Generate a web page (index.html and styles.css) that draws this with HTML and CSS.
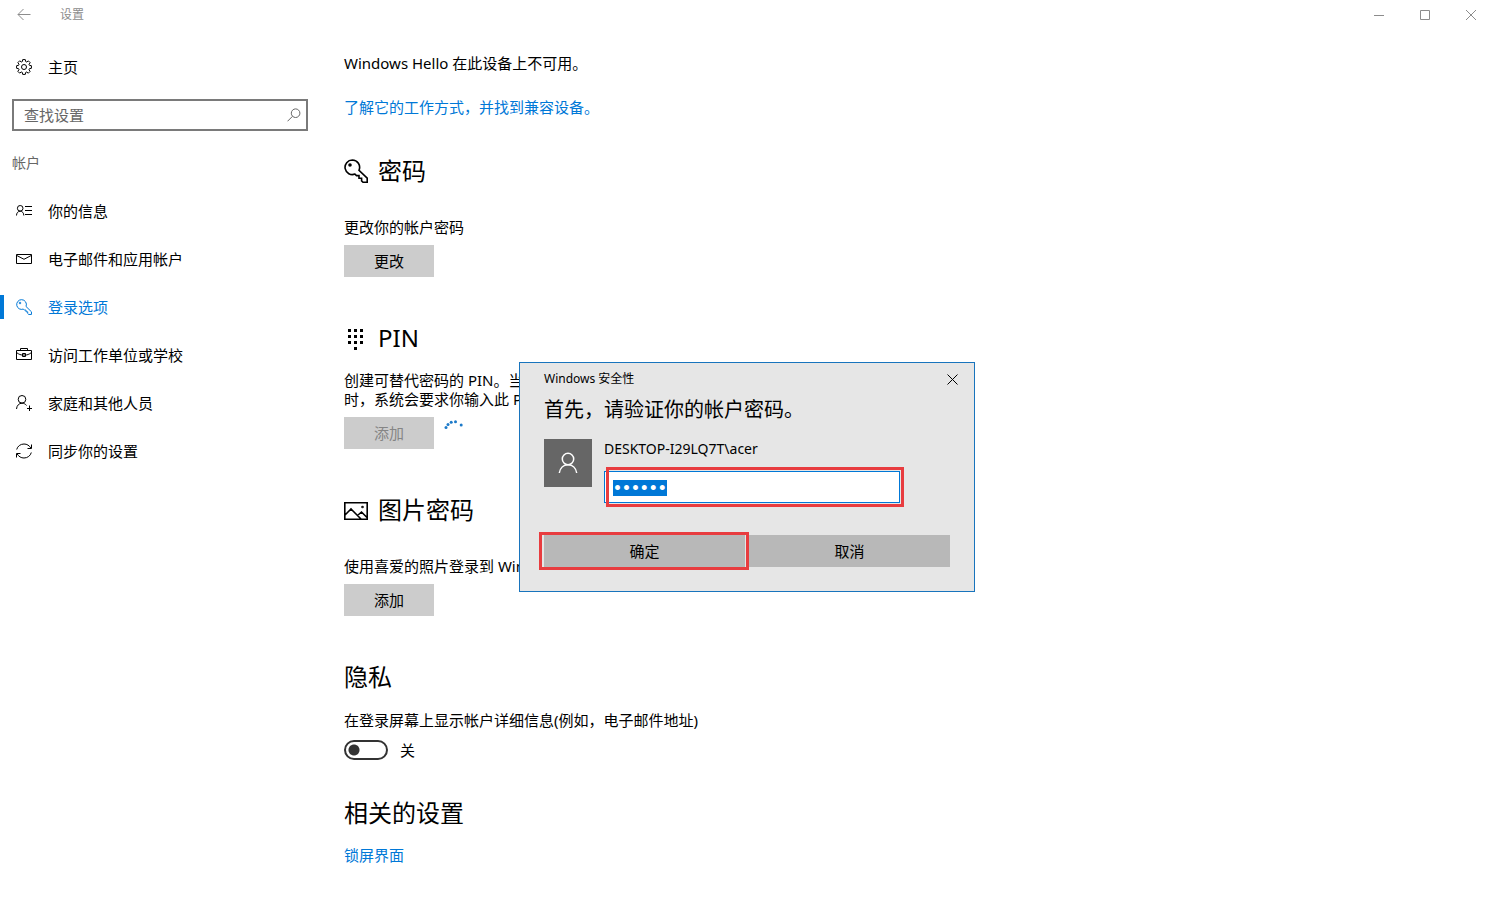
FILE: index.html
```html
<!DOCTYPE html>
<html lang="zh-CN">
<head>
<meta charset="utf-8">
<title>设置</title>
<link rel="stylesheet" href="styles.css">
</head>
<body>
<div class="window">
  <header class="titlebar">
    <button class="back" aria-label="返回"><svg width="14" height="14" viewBox="0 0 14 14"><path d="M13.500 6.500H1M6.500 1L1 6.500L6.500 12"/></svg></button>
    <span class="title">设置</span>
    <div class="caption">
      <button aria-label="最小化"><svg width="10" height="10" viewBox="0 0 10 10"><path d="M0 5.500H10"/></svg></button>
      <button aria-label="最大化"><svg width="10" height="10" viewBox="0 0 10 10"><path d="M.5 .5H9.500V9.500H.5Z"/></svg></button>
      <button aria-label="关闭"><svg width="10" height="10" viewBox="0 0 10 10"><path d="M0 0L10 10M10 0L0 10"/></svg></button>
    </div>
  </header>
  <div class="body">
    <aside class="sidebar">
      <a class="item" href="#home">
        <svg width="16" height="16" viewBox="0 0 16 16"><path d="M6.700 .6H9.300L9.700 2.600L10.700 3L12.400 1.900L14.200 3.700L13 5.300L13.400 6.300L15.400 6.700V9.300L13.400 9.700L13 10.700L14.100 12.400L12.300 14.200L10.700 13L9.700 13.400L9.300 15.400H6.700L6.300 13.400L5.300 13L3.600 14.100L1.800 12.300L3 10.700L2.600 9.700L.6 9.300V6.700L2.600 6.300L3 5.300L1.900 3.600L3.700 1.800L5.300 3L6.300 2.600Z"/><circle cx="8" cy="8" r="2.500"/></svg>
        <span>主页</span>
      </a>
      <div class="search">
        <input type="text" placeholder="查找设置" aria-label="查找设置">
        <svg width="14" height="14" viewBox="0 0 14 14"><circle cx="8.600" cy="5.200" r="4.300"/><path d="M5.500 8.300L.5 13.300"/></svg>
      </div>
      <h2 class="group">帐户</h2>
      <nav class="nav">
        <a class="item" href="#info">
          <svg width="16" height="16" viewBox="0 0 16 16"><circle cx="4.200" cy="5.300" r="2.800"/><path d="M.5 12.500C.5 10 2 8.200 4.200 8.200S7.800 10 7.800 12.500M9 3.500H16M9 7.500H16M9 11.500H16"/></svg>
          <span>你的信息</span>
        </a>
        <a class="item" href="#mail">
          <svg width="16" height="16" viewBox="0 0 16 16"><path d="M.5 3.500H15.500V12.500H.5ZM.8 4.500L8 8.300L15.200 4.500"/></svg>
          <span>电子邮件和应用帐户</span>
        </a>
        <a class="item active" href="#signin" aria-current="page">
          <svg width="16" height="16" viewBox="0 0 24 24" class="scaled"><path d="M8.300 1A7.300 7.300 0 1 0 11 15.100L12.500 16.600H15V19.200H17.600V21.800L19 23.200H23.200V19.200L15 11.200A7.300 7.300 0 0 0 8.300 1Z"/><circle cx="6" cy="6" r="1.200"/></svg>
          <span>登录选项</span>
        </a>
        <a class="item" href="#work">
          <svg width="16" height="16" viewBox="0 0 16 16"><path d="M.5 3.500H15.500V12.500H.5ZM4.500 3.500V1.500H11.500V3.500M.5 5.500C3 7.500 5 8 6.500 8H9.500C11 8 13 7.500 15.500 5.500M6.500 6.500H9.500V9.500H6.500Z"/></svg>
          <span>访问工作单位或学校</span>
        </a>
        <a class="item" href="#family">
          <svg width="16" height="16" viewBox="0 0 16 16"><circle cx="6" cy="4.300" r="3.800"/><path d="M.5 14C.8 10.500 3 8.200 6 8.200C7.800 8.200 9.500 9 10.500 10.500M13.500 10.500V16M11 13.500H16"/></svg>
          <span>家庭和其他人员</span>
        </a>
        <a class="item" href="#sync">
          <svg width="16" height="16" viewBox="0 0 16 16"><path d="M.7 6.500C1.500 3.200 4.500 1 8 1C11 1 13.300 2.500 14.800 5M15.500 1.500V5.500H11.500M15.300 9.500C14.500 12.800 11.500 15 8 15C5 15 2.700 13.500 1.200 11M.5 14.500V10.500H4.500"/></svg>
          <span>同步你的设置</span>
        </a>
      </nav>
    </aside>
    <main class="content">
      <p>Windows Hello 在此设备上不可用。</p>
      <a class="link learn" href="#learn">了解它的工作方式，并找到兼容设备。</a>

      <section class="option roomy">
        <h1><svg width="24" height="24" viewBox="0 0 24 24" class="bold"><path d="M8.300 1A7.300 7.300 0 1 0 11 15.100L12.500 16.600H15V19.200H17.600V21.800L19 23.200H23.200V19.200L15 11.200A7.300 7.300 0 0 0 8.300 1Z"/><circle cx="6" cy="6" r="1" fill="currentColor"/></svg>密码</h1>
        <p>更改你的帐户密码</p>
        <button class="action">更改</button>
      </section>

      <section class="option">
        <h1><svg width="24" height="24" viewBox="0 0 24 24" class="solid"><path d="M4 3h3v3H4zM10 3h3v3h-3zM16 3h3v3h-3zM4 9h3v3H4zM10 9h3v3h-3zM16 9h3v3h-3zM4 15h3v3H4zM10 15h3v3h-3zM16 15h3v3h-3zM10 21h3v3h-3z"/></svg>PIN</h1>
        <p class="multi">创建可替代密码的 PIN。当<br>时，系统会要求你输入此 PIN</p>
        <div class="row">
          <button class="action" disabled>添加</button>
          <svg width="20" height="20" viewBox="0 0 20 20" class="spinner"><circle cx="2" cy="8.500" r="1.500"/><circle cx="4" cy="5.500" r="1.500"/><circle cx="7.200" cy="3.300" r="1.500"/><circle cx="11.500" cy="2.700" r="1.500"/><circle cx="17.200" cy="6" r="1.500"/></svg>
        </div>
      </section>

      <section class="option roomy">
        <h1><svg width="24" height="24" viewBox="0 0 24 24" class="bold"><path d="M.8 4.800H23.200V21.200H.8ZM1 17L7 11L17 21M13.500 17.500L17.500 14L23 19.500"/><circle cx="18.500" cy="9" r=".5"/></svg>图片密码</h1>
        <p>使用喜爱的照片登录到 Windows</p>
        <button class="action">添加</button>
      </section>

      <section class="option">
        <h1>隐私</h1>
        <p id="details">在登录屏幕上显示帐户详细信息(例如，电子邮件地址)</p>
        <div class="row">
          <input class="switch" id="toggle" type="checkbox" role="switch" aria-describedby="details">
          <label for="toggle">关</label>
        </div>
      </section>

      <section class="option related">
        <h1>相关的设置</h1>
        <a class="link" href="#lock">锁屏界面</a>
      </section>
    </main>
  </div>
</div>

<div class="dialog" role="dialog" aria-labelledby="prompt">
  <div class="dialog-bar">
    <span>Windows 安全性</span>
    <button aria-label="关闭"><svg width="11" height="11" viewBox="0 0 11 11"><path d="M.5 .5L10.500 10.500M10.500 .5L.5 10.500"/></svg></button>
  </div>
  <h2 id="prompt">首先，请验证你的帐户密码。</h2>
  <div class="account">
    <div class="avatar"><svg width="24" height="24" viewBox="0 0 24 24"><circle cx="12" cy="8" r="5.700"/><path d="M3.300 22C4 17 7.500 13.700 12 13.700S20 17 20.700 22"/></svg></div>
    <div class="credentials">
      <label for="password">DESKTOP-I29LQ7T\acer</label>
      <div class="field">
        <input id="password" type="password" value="123456">
        <span class="mark"></span>
      </div>
    </div>
  </div>
  <div class="buttons">
    <div class="choice"><button>确定</button><span class="mark"></span></div>
    <div class="choice"><button>取消</button></div>
  </div>
</div>
<script src="script.js"></script>
</body>
</html>
```
FILE: styles.css
```css
* { box-sizing: border-box; }
body {
  margin: 0;
  background: #fff;
  color: #000;
  font: 15px/20px "Noto Sans", "Noto Sans CJK SC", sans-serif;
}
h1, h2, p { margin: 0; font-weight: 400; }
button, input { font: inherit; color: inherit; border: 0; border-radius: 0; padding: 0; }
button { background: none; }
a { color: inherit; text-decoration: none; }
svg { flex: none; fill: none; stroke: currentColor; stroke-width: 1; }
svg.scaled { stroke-width: 1.5; }
svg.bold { stroke-width: 1.6; }
svg.solid { fill: currentColor; stroke: none; }
svg.spinner { fill: #1c7ac9; stroke: none; }

.window { min-height: 100vh; display: flex; flex-direction: column; }
.titlebar { display: flex; align-items: center; height: 30px; color: #8c8c8c; font-size: 12px; }
.back { display: flex; justify-content: center; width: 48px; }
.title { padding-left: 12px; }
.caption { display: flex; margin-left: auto; }
.caption button { display: flex; align-items: center; justify-content: center; width: 46px; height: 30px; padding-left: 4px; }

.body { display: flex; flex: 1; }
.sidebar { flex: none; width: 320px; padding-top: 13px; }
.item { display: flex; align-items: center; gap: 16px; height: 48px; padding-left: 16px; }
.item.active { position: relative; color: #0078d7; }
.item.active::before { content: ""; position: absolute; left: 0; top: 12px; width: 4px; height: 24px; background: #0078d7; }
.search {
  display: flex; align-items: center;
  height: 32px; margin: 8px 12px; padding: 0 5px 0 10px;
  border: 2px solid #7a7a7a; color: #666;
}
.search input { flex: 1; min-width: 0; background: none; outline: 0; }
.search input::placeholder { color: #666; opacity: 1; }
.group { padding-left: 12px; color: #666; font-size: 14px; line-height: 48px; }

.content { flex: 1; min-width: 0; padding: 23px 24px; }
.link { color: #0078d7; }
.learn { display: block; margin-top: 24px; }
.option { margin-top: 45px; }
.learn + .option { margin-top: 38px; }
.option.related { margin-top: 27px; }
.option h1 { display: flex; align-items: center; gap: 10px; margin-bottom: 17px; font-size: 24px; line-height: 32px; }
.option.roomy h1 { margin-bottom: 30px; }
.option .multi { line-height: 19px; }
.action { display: block; width: 90px; height: 32px; margin-top: 8px; background: #ccc; }
.action:disabled { color: #858585; }
.row { display: flex; align-items: center; gap: 10px; }
.switch {
  appearance: none; width: 44px; height: 20px; margin: 10px 2px 10px 0;
  border: 2px solid #333; border-radius: 10px;
  background: radial-gradient(circle at 8px 8px, #333 5px, transparent 6px);
}
.option.related h1 { margin-bottom: 16px; }

.dialog {
  position: absolute; top: 362px; left: calc(50% - 227px); width: 456px;
  padding: 6px 24px 24px;
  border: 1px solid #1874bd; background: #e6e6e6;
}
.dialog-bar { display: flex; align-items: center; justify-content: space-between; font-size: 12px; }
.dialog-bar button { display: flex; justify-content: center; width: 20px; margin-right: -12px; }
.dialog h2 { margin-top: 6px; font-size: 20px; line-height: 30px; }
.account { display: flex; gap: 12px; margin-top: 14px; }
.avatar { display: flex; align-items: center; justify-content: center; width: 48px; height: 48px; background: #666; color: #fff; }
.avatar svg { stroke-width: 1.5; }
.credentials { flex: 1; font-size: 14px; }
.credentials label { display: block; }
.field { position: relative; margin: 12px 50px 0 0; }
.field input {
  display: block; width: 100%; height: 32px; padding: 2px 8px 0;
  border: 1px solid #0078d7; outline: 0; background: #fff;
  font: bold 14px/20px "DejaVu Sans", sans-serif;
}
.field input::selection { background: #0078d7; color: #fff; }
.mark { position: absolute; border: 3px solid #e83c3f; pointer-events: none; }
.field .mark { inset: -4px -4px -4px 2px; }
.buttons { display: grid; grid-template-columns: 1fr 1fr; gap: 4px; margin-top: 32px; }
.choice { position: relative; }
.choice button { display: block; width: 100%; height: 32px; background: #b8b8b8; }
.choice .mark { inset: -3px -4px -3px -5px; }
```
FILE: script.js
```js
const password = document.getElementById('password');
password.focus();
password.select();
```
